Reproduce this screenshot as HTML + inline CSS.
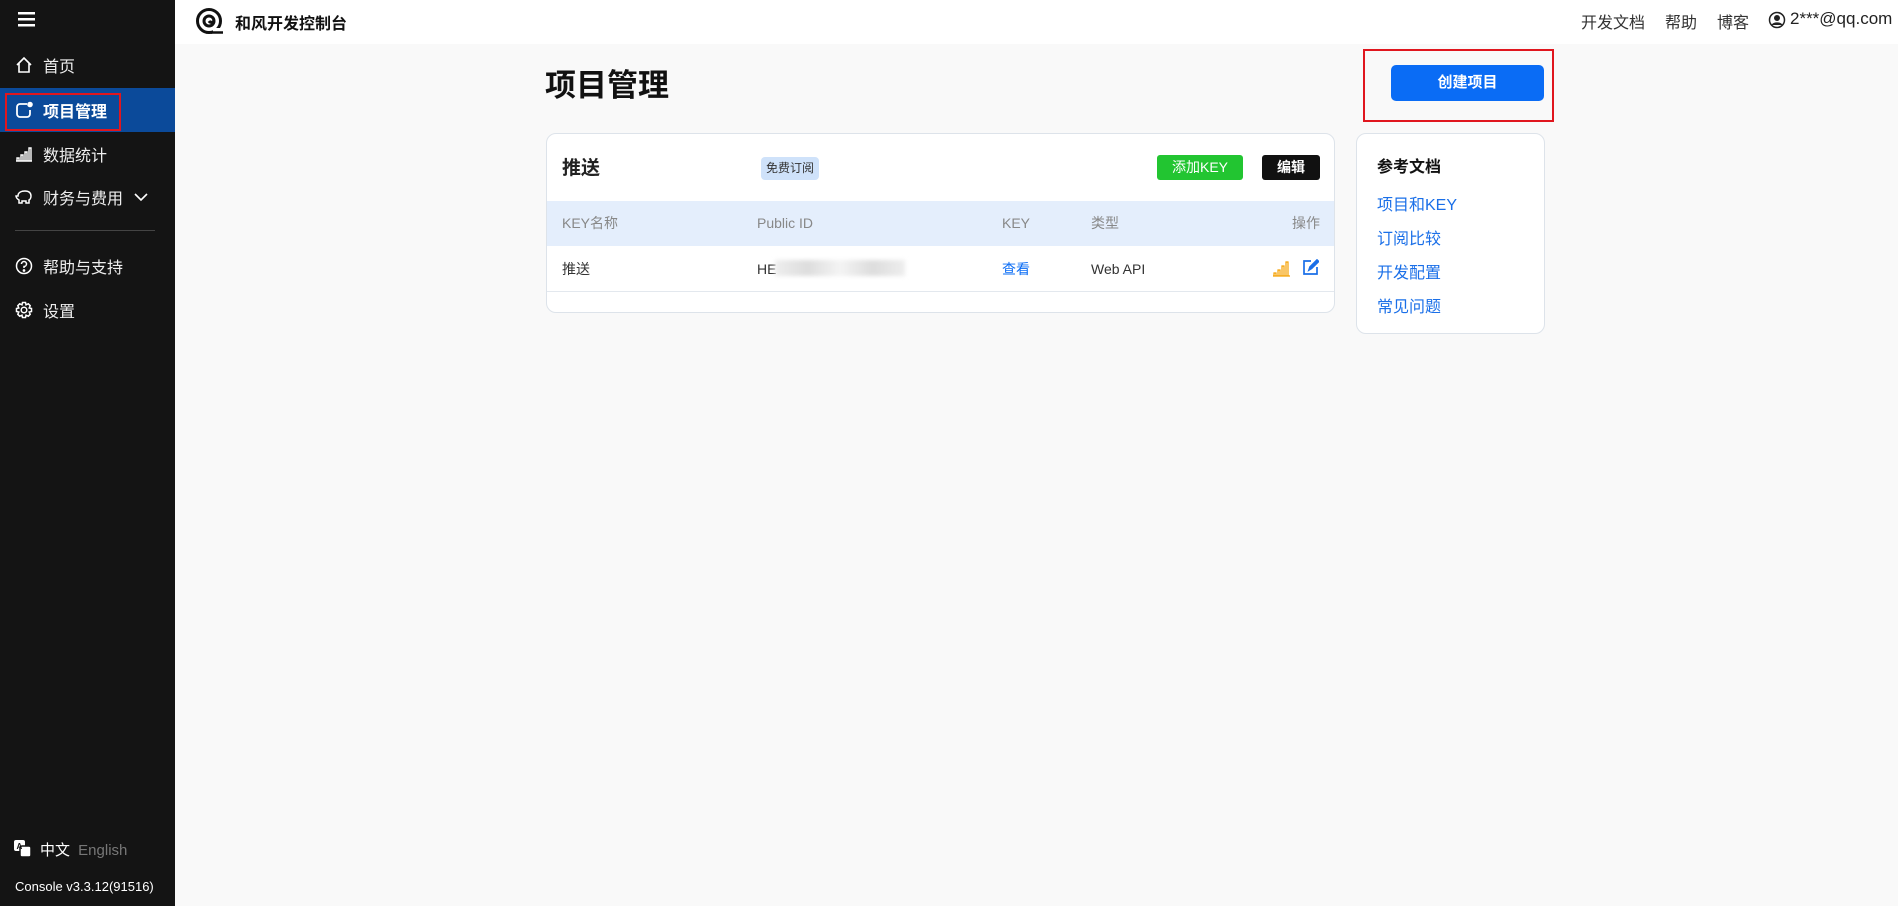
<!DOCTYPE html>
<html><head><meta charset="utf-8"><style>
*{margin:0;padding:0;box-sizing:border-box}
body{width:1898px;height:906px;overflow:hidden;background:#f9f9f9;font-family:"Liberation Sans","Noto Sans CJK SC",sans-serif;position:relative;color:#222}
.abs{position:absolute}
#side{left:0;top:0;width:175px;height:906px;background:#141414;color:#fff}
.mi{position:absolute;left:0;width:175px;height:44px;display:flex;align-items:center;font-size:16px;color:#eee}
.mi svg{position:absolute;left:15px}
.mi span{position:absolute;left:43px}
#hdr{left:175px;top:0;width:1723px;height:44px;background:#fff}
.card{background:#fff;border:1px solid #dde3ea;border-radius:10px}
.lnk{color:#1a6fe8;font-size:16px;position:absolute;left:20px}
.th{position:absolute;font-size:14px;color:#888;top:12px;line-height:20px}
.td{position:absolute;font-size:14px;color:#333;top:13px;line-height:20px}
</style></head><body>
<div id="side" class="abs">
 <svg class="abs" style="left:17px;top:10px" width="20" height="18"><rect x="1" y="2" width="17" height="2.5" fill="#fff"/><rect x="1" y="8" width="17" height="2.5" fill="#fff"/><rect x="1" y="14" width="17" height="2.5" fill="#fff"/></svg>
 <div class="mi" style="top:43px"><svg width="18" height="18" fill="none" stroke="#fff" stroke-width="1.6"><path d="M2 9 L9 2 L16 9 M4 7 V16 H14 V7"/></svg><span>首页</span></div>
 <div class="mi" style="top:88px;background:#0b4a9a;font-weight:bold;color:#fff"><svg width="18" height="18" fill="none" stroke="#fff" stroke-width="1.8"><path d="M12 3 H5 A3 3 0 0 0 2 6 V13 A3 3 0 0 0 5 16 H12 A3 3 0 0 0 15 13 V9"/><circle cx="15" cy="3.5" r="2.8" fill="#fff" stroke="none"/></svg><span>项目管理</span></div>
 <div class="abs" style="left:5px;top:93px;width:116px;height:38px;border:2px solid #e0161e"></div>
 <div class="mi" style="top:132px"><svg width="18" height="18" fill="none" stroke="#fff" stroke-width="1.4"><path d="M1 16 H17 M2 16 V13 H4 V16 M6 16 V10 H8 V16 M10 16 V7 H12 V16 M14 16 V3 H16 V16"/></svg><span>数据统计</span></div>
 <div class="mi" style="top:175px"><svg width="18" height="18" fill="none" stroke="#fff" stroke-width="1.5"><path d="M3 8 C3 4 7 3 10 3 C14 3 16 5 16 8 C16 11 14 12 14 12 V15 H11 V13 H7 V15 H4 V12 C2 11 1 9 1 8 Z"/></svg><span>财务与费用</span><svg style="left:133px" width="16" height="16" fill="none" stroke="#fff" stroke-width="1.6"><path d="M2 5 L8 11 L14 5"/></svg></div>
 <div class="abs" style="left:15px;top:230px;width:140px;height:1px;background:#444"></div>
 <div class="mi" style="top:244px"><svg width="18" height="18" fill="none" stroke="#fff" stroke-width="1.5"><circle cx="9" cy="9" r="7.5"/><path d="M6.5 7 A2.5 2.5 0 1 1 9 9.5 V11"/><circle cx="9" cy="13.5" r=".6" fill="#fff"/></svg><span>帮助与支持</span></div>
 <div class="mi" style="top:288px"><svg width="18" height="18" fill="none" stroke="#fff" stroke-width="1.5"><circle cx="9" cy="9" r="2.8"/><path d="M7.5 1.5 H10.5 L11 3.8 L13.3 2.8 L15.2 4.7 L14.2 7 L16.5 7.5 V10.5 L14.2 11 L15.2 13.3 L13.3 15.2 L11 14.2 L10.5 16.5 H7.5 L7 14.2 L4.7 15.2 L2.8 13.3 L3.8 11 L1.5 10.5 V7.5 L3.8 7 L2.8 4.7 L4.7 2.8 L7 3.8 Z"/></svg><span>设置</span></div>
 <svg class="abs" style="left:14px;top:840px" width="18" height="18"><rect x="0" y="0" width="11" height="11" rx="2" fill="#fff"/><rect x="6" y="6" width="11" height="11" rx="2" fill="#fff" stroke="#141414" stroke-width="1.5"/><text x="2.5" y="9" font-size="8" font-family="Liberation Sans" fill="#141414" font-weight="bold">A</text></svg>
 <div class="abs" style="left:40px;top:839px;font-size:15px;color:#fff">中文 <span style="color:#777;margin-left:4px">English</span></div>
 <div class="abs" style="left:15px;top:879px;font-size:13px;color:#fff">Console v3.3.12(91516)</div>
</div>
<div id="hdr" class="abs">
 <svg class="abs" style="left:20px;top:7px" width="30" height="30" fill="none" stroke="#111" stroke-width="3"><circle cx="14" cy="14" r="11.5"/><circle cx="14" cy="14" r="5"/><path d="M19 14 A3 3 0 0 1 14 14"/><rect x="18" y="21" width="10" height="5" fill="#fff" stroke="none"/><path d="M16 25.5 H28" stroke-width="2.5"/></svg>
 <div class="abs" style="left:60px;top:10px;font-size:16px;font-weight:bold;color:#111">和风开发控制台</div>
 <div class="abs" style="left:1406px;top:9px;font-size:16px;color:#333;white-space:nowrap">开发文档<span style="margin-left:20px">帮助</span><span style="margin-left:20px">博客</span></div>
 <svg class="abs" style="left:1593px;top:11px" width="18" height="18"><circle cx="9" cy="9" r="7.5" fill="none" stroke="#222" stroke-width="1.5"/><circle cx="9" cy="7" r="3" fill="#222"/><path d="M3.5 14 C5 10.5 13 10.5 14.5 14" fill="#222"/></svg>
 <div class="abs" style="left:1615px;top:9px;font-size:17px;color:#222">2***@qq.com</div>
</div>
<div class="abs" style="left:545px;top:60px;font-size:31px;font-weight:bold;color:#111">项目管理</div>
<div class="abs" style="left:1363px;top:49px;width:191px;height:73px;border:2px solid #e0161e"></div>
<div class="abs" style="left:1391px;top:65px;width:153px;height:36px;background:#0a6cf5;border-radius:5px;color:#fff;font-weight:bold;font-size:15px;text-align:center;line-height:36px">创建项目</div>
<div class="abs card" style="left:546px;top:133px;width:789px;height:180px">
 <div class="abs" style="left:15px;top:19px;font-size:19px;font-weight:bold;color:#222">推送</div>
 <div class="abs" style="left:214px;top:23px;width:58px;height:23px;background:#cfe2fa;border-radius:4px;font-size:12px;line-height:23px;text-align:center;color:#333">免费订阅</div>
 <div class="abs" style="left:610px;top:21px;width:86px;height:25px;background:#22c531;border-radius:3px;color:#fff;font-size:14px;text-align:center;line-height:25px">添加KEY</div>
 <div class="abs" style="left:715px;top:21px;width:58px;height:25px;background:#111;border-radius:3px;color:#fff;font-size:14px;text-align:center;line-height:25px;font-weight:bold">编辑</div>
 <div class="abs" style="left:0;top:67px;width:787px;height:45px;background:#e4eefc">
  <div class="th" style="left:15px">KEY名称</div><div class="th" style="left:210px">Public ID</div><div class="th" style="left:455px">KEY</div><div class="th" style="left:544px">类型</div><div class="th" style="right:14px">操作</div>
 </div>
 <div class="abs" style="left:0;top:112px;width:787px;height:46px;border-bottom:1px solid #e3e8ee">
  <div class="td" style="left:15px">推送</div><div class="td" style="left:210px">HE</div>
  <div class="abs" style="left:228px;top:14px;width:130px;height:16px;background:linear-gradient(90deg,#eee,#ddd,#f4f4f4,#ddd,#eee);filter:blur(2px)"></div>
  <div class="td" style="left:455px;color:#0a6cf5">查看</div><div class="td" style="left:544px">Web API</div>
  <svg class="abs" style="left:726px;top:14px" width="17" height="17" fill="none" stroke="#f5a000" stroke-width="1.2"><path d="M0 16 H17 M1 16 V13 H3 V16 M5 16 V10 H7 V16 M9 16 V6 H11 V16 M13 16 V2 H15 V16"/></svg>
  <svg class="abs" style="left:755px;top:13px" width="17" height="17" fill="none" stroke="#1a6fe8" stroke-width="1.7"><path d="M9 2 H2 V15 H15 V8"/><path d="M7 11 L8 8 L15 1 L16.5 2.5 L9.5 9.5 Z" fill="#1a6fe8"/></svg>
 </div>
</div>
<div class="abs card" style="left:1356px;top:133px;width:189px;height:201px">
 <div class="abs" style="left:20px;top:19px;font-size:16px;font-weight:bold;color:#111">参考文档</div>
 <div class="lnk" style="top:57px">项目和KEY</div>
 <div class="lnk" style="top:91px">订阅比较</div>
 <div class="lnk" style="top:125px">开发配置</div>
 <div class="lnk" style="top:159px">常见问题</div>
</div>
</body></html>
